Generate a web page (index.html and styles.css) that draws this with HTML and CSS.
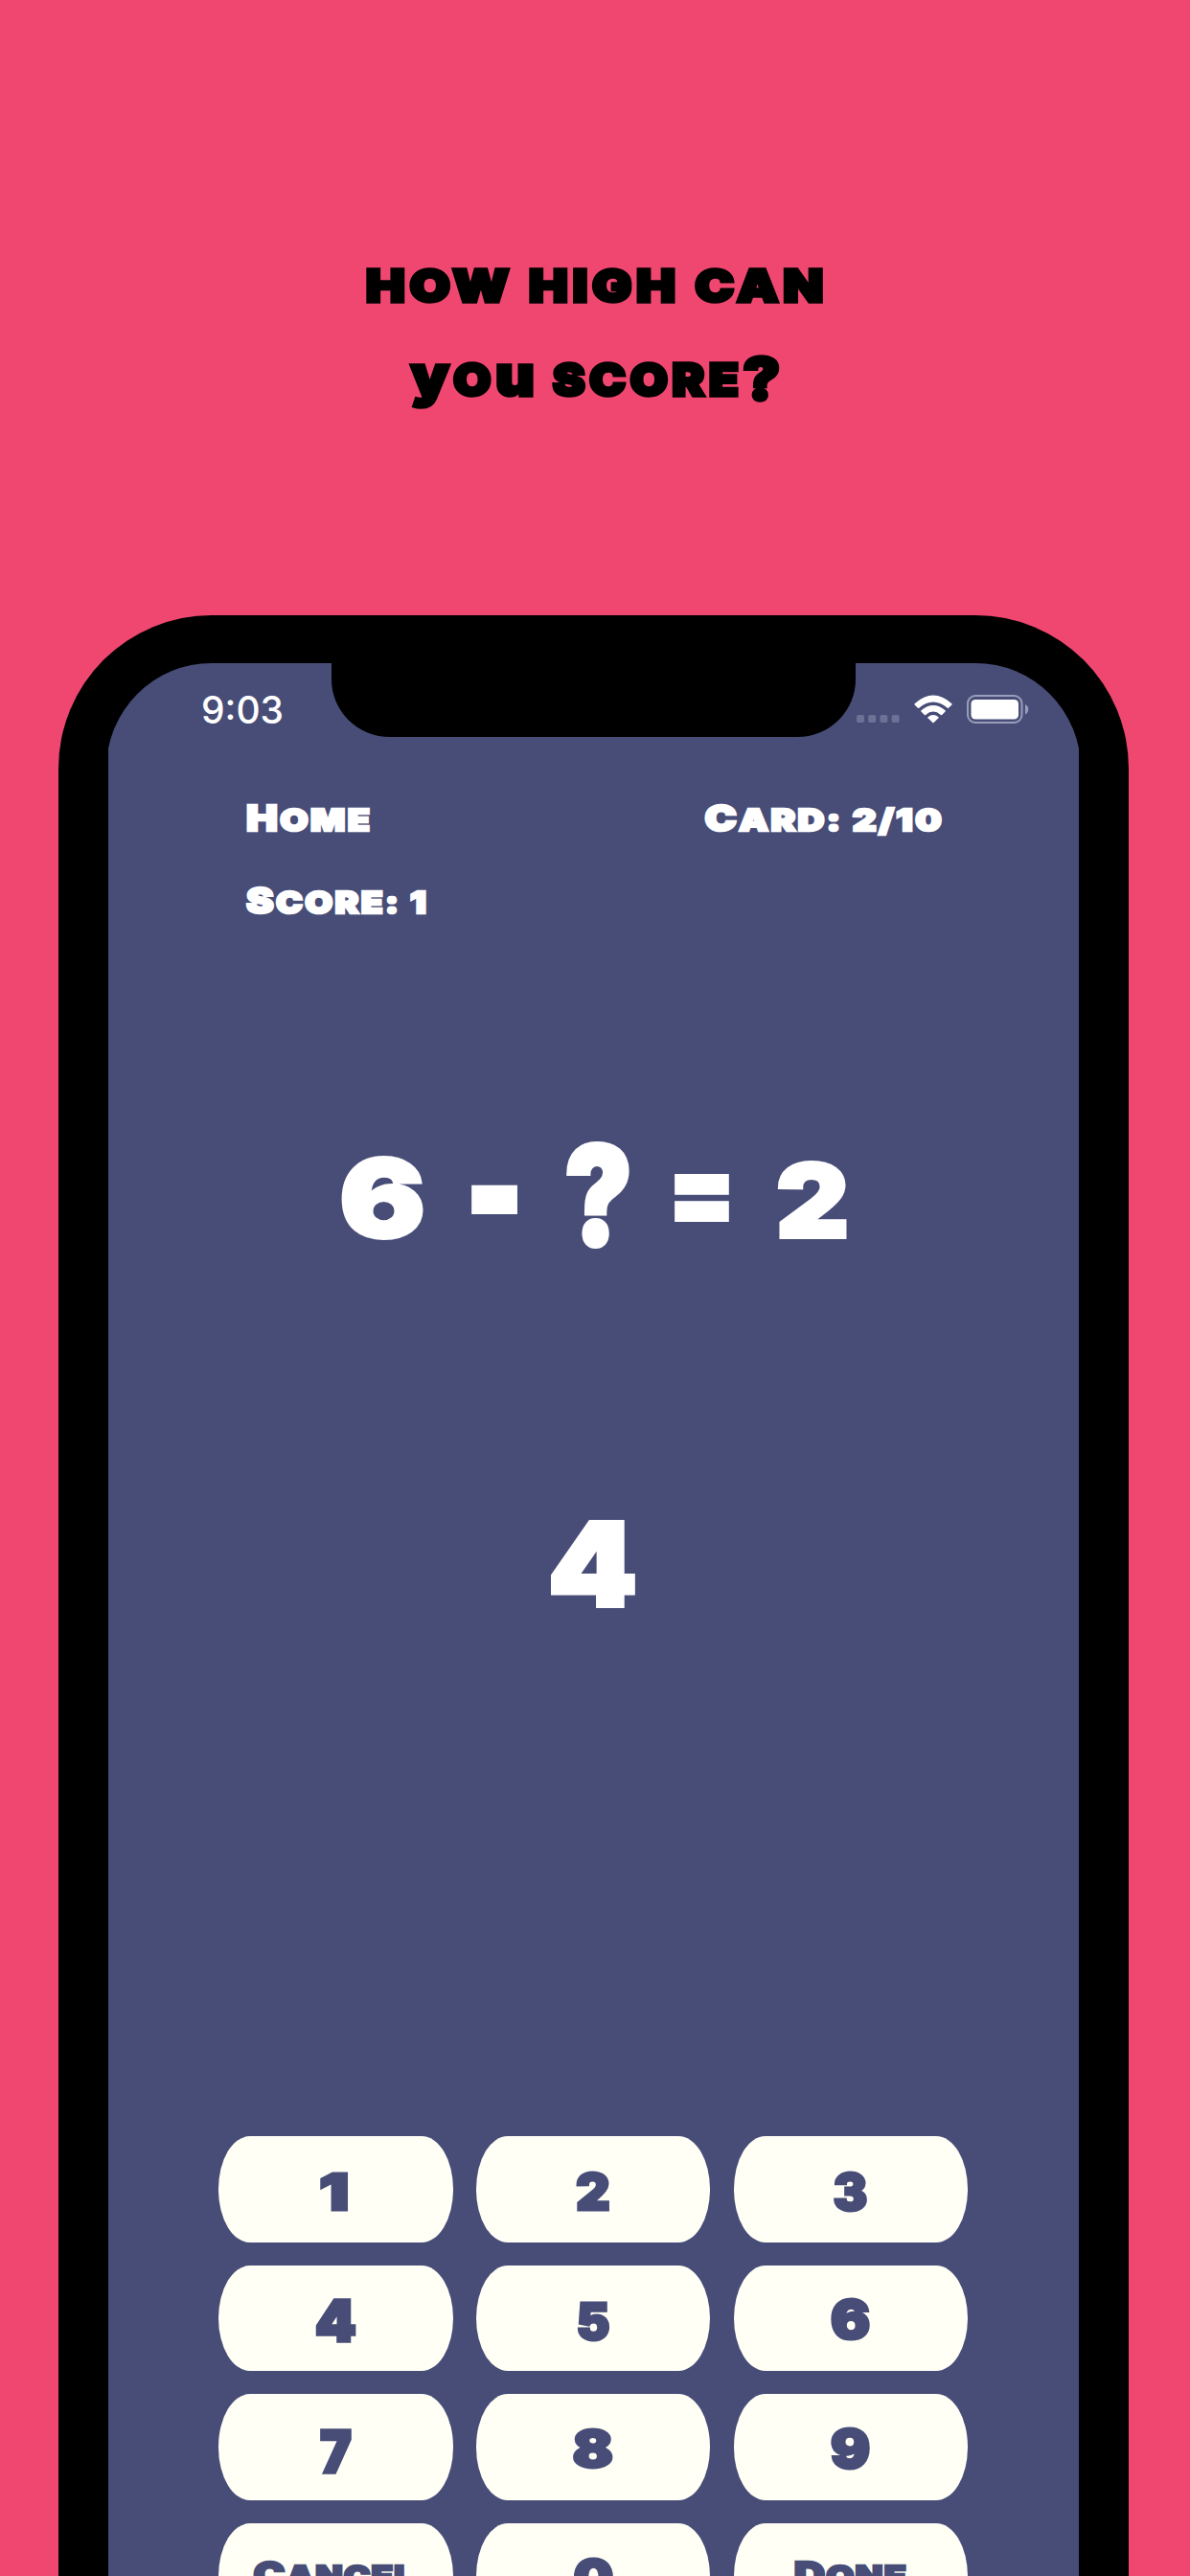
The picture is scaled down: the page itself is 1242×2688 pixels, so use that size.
FILE: index.html
```html
<!DOCTYPE html>
<html lang="en">
<head>
<meta charset="utf-8">
<title>Math Cards</title>
<link rel="stylesheet" href="styles.css">
</head>
<body>
<h1 class="headline">
  <span class="line line-1">how high can</span>
  <span class="line line-2"><span class="low">y</span>o<span class="low">u</span> score<span class="mark">?</span></span>
</h1>
<main class="phone">
  <div class="screen">
    <div class="status">
      <span class="time">9:03</span>
      <span class="notch"></span>
      <span class="indicators">
        <svg class="signal" viewBox="0 0 45 8" width="45" height="8"><rect width="8" height="8" rx="2"/><rect x="12.2" width="8" height="8" rx="2"/><rect x="24.4" width="8" height="8" rx="2"/><rect x="36.6" width="8" height="8" rx="2"/></svg>
        <svg class="wifi" viewBox="0 0 40 30" width="40" height="30"><path d="M0.6 9.2Q20-8.2 39.4 9.2Q39.9 9.8 39.4 10.4L36 13.8Q35.4 14.3 34.8 13.8Q20 1.2 5.200 13.800Q4.600 14.300 4 13.800L.6 10.400Q.1 9.800.6 9.200Z"/><path d="M7.400 16.300Q20 5.700 32.600 16.300Q33.100 16.900 32.600 17.500L29.100 21Q28.500 21.500 27.900 21Q20 14.200 12.100 21Q11.500 21.500 10.900 21L7.400 17.500Q6.900 16.900 7.400 16.300Z"/><path d="M14.500 23.200Q20 18.800 25.500 23.200Q26 23.700 25.500 24.300L20.600 29.100Q20 29.600 19.400 29.100L14.500 24.300Q14 23.700 14.500 23.200Z"/></svg>
        <svg class="battery" viewBox="0 0 65 30" width="65" height="30"><rect class="shell" x="1" y="1" width="56.500" height="28" rx="8"/><rect x="4.500" y="5" width="49.500" height="20.500" rx="4.500"/><path class="tip" d="M61 10Q64.300 11.500 64.300 15Q64.300 18.500 61 20.500Z"/></svg>
      </span>
    </div>
    <header class="info">
      <div class="label home">Home</div>
      <div class="label card">Card: 2/10</div>
      <div class="label score">Score: 1</div>
    </header>
    <div class="equation">
      <span class="eq six">6</span><span class="eq minus">-</span><span class="eq unknown">?</span><span class="eq equals">=</span><span class="eq two">2</span>
    </div>
    <div class="answer">4</div>
    <div class="keypad">
      <div class="key"><span class="k1">1</span></div><div class="key"><span class="k2">2</span></div><div class="key"><span class="k3">3</span></div>
      <div class="key"><span class="k4">4</span></div><div class="key"><span class="k5">5</span></div><div class="key"><span class="k6">6</span></div>
      <div class="key"><span class="k7">7</span></div><div class="key"><span class="k8">8</span></div><div class="key"><span class="k9">9</span></div>
      <div class="key word"><span class="cancel">Cancel</span></div><div class="key"><span class="k0">0</span></div><div class="key word"><span class="done">Done</span></div>
    </div>
  </div>
</main>
</body>
</html>
```
FILE: styles.css
```css
* { box-sizing: border-box; }
html, body { margin: 0; height: 2688px; overflow: hidden; }
body {
  background: #f04770;
  font-family: Inter, "Liberation Sans", sans-serif;
  font-weight: 900;
}
.headline {
  display: flex;
  flex-direction: column;
  align-items: center;
  margin: 0;
  height: 642px;
  padding-top: 249px;
  font-size: 47px;
  font-weight: 900;
  color: #000;
  -webkit-text-stroke: 3.500px #000;
}
.line {
  display: block;
  height: 98px;
  line-height: 98px;
  text-transform: uppercase;
  letter-spacing: 4px;
}
.line-1 { transform: translateX(2px) scaleX(1.165); }
.line-2 { transform: translateX(3px) scaleX(1.085); }
.line .low { font-size: 58px; line-height: 0; text-transform: none; }
.line .mark { font-size: 60px; line-height: 0; vertical-align: -4px; }

.phone {
  width: 1117px;
  height: 2046px;
  margin-left: 61px;
  padding: 50px 50px 0;
  background: #000;
  border-radius: 160px 160px 0 0;
}
.screen {
  height: 1996px;
  padding: 0 2px;
  overflow: hidden;
  clip-path: inset(0 2px);
  background: #474d77;
  border-radius: 110px 110px 0 0;
  color: #fff;
}
.status {
  display: grid;
  grid-template-columns: 233px 547.400px 1fr;
  grid-template-rows: 77px;
  height: 77px;
}
.time {
  padding-left: 97px;
  font-size: 39px;
  font-weight: 550;
  line-height: 97px;
}
.notch { background: #000; border-radius: 0 0 61px 61px / 0 0 60px 60px; }
.indicators { display: flex; align-items: flex-start; padding: 33px 0 0 1px; fill: #fff; }
.signal { margin-top: 21px; fill: #6c7196; }
.wifi { margin-left: 15px; }
.battery { margin-left: 15px; }
.shell { fill: none; stroke: #9a9dba; stroke-width: 2; }
.tip { fill: #9a9dba; }

.info {
  display: grid;
  grid-template-columns: 1fr auto;
  grid-template-rows: 86px 86px;
  height: 214px;
  padding: 44px 144px 0;
}
.label {
  font-size: 32px;
  line-height: 86px;
  text-transform: uppercase;
  letter-spacing: 2px;
  transform-origin: left center;
  -webkit-text-stroke: 2.500px #fff;
}
.label::first-letter { font-size: 37px; line-height: 0; }
.home { transform: scaleX(1.185); }
.score { transform: scaleX(1.165); }
.card { transform-origin: right center; transform: translateX(3px) scaleX(1.205); }

.equation {
  display: grid;
  grid-template-columns: 118px 112px 107px 111px 120px;
  margin: 192px 0 0 227px;
  height: 150px;
}
.eq {
  text-align: center;
  font-size: 112px;
  line-height: 150px;
  -webkit-text-stroke: 4px #fff;
}
.six { transform: translateX(0) scaleX(1.18); }
.minus { transform: translate(2px, -12px) scale(1.16, 1.55); -webkit-text-stroke-width: 3px; }
.unknown { font-size: 144px; transform: translate(1px, -3px) scaleX(.83); }
.equals { transform: translateY(-8px) scaleX(.9); }
.two { transform: translateY(2px) scale(1.05, .95); }

.answer {
  margin-top: 232px;
  height: 150px;
  text-align: center;
  font-size: 121px;
  line-height: 150px;
  transform: translateX(-1px) scaleX(1.1);
  -webkit-text-stroke: 4px #fff;
}
.keypad {
  display: grid;
  grid-template-columns: repeat(3, 244.500px);
  grid-auto-rows: 110.500px;
  gap: 24px 24.300px;
  margin: 522px 0 0 115px;
}
.key {
  display: flex;
  justify-content: center;
  align-items: center;
  background: #fffff5;
  border-radius: 33px / 55px;
  color: #474d77;
  font-size: 52px;
  line-height: 1;
  -webkit-text-stroke: 3px #474d77;
}
.k1 { transform: translate(-1px, 4px) scaleX(1.32); }
.k2 { transform: translateY(4px) scaleX(1.05); }
.k3 { transform: translateY(4px) scaleX(1.02); }
.k4 { transform: translateY(4px) scale(1.17, 1.13); }
.k5 { transform: translateY(4px); }
.k6 { transform: translateY(2px) scale(1.17, 1.05); }
.k7 { transform: translateY(6px) scale(1.05, 1.15); }
.k8 { transform: translateY(3px) scaleX(1.19); }
.k9 { transform: translateY(3px) scale(1.17, 1.05); }
.k0 { transform: translateY(3px) scaleX(1.13); }
.word { font-size: 31px; text-transform: uppercase; letter-spacing: 1px; -webkit-text-stroke-width: 2.500px; }
.word span { display: block; line-height: 40px; }
.word span::first-letter { font-size: 37px; line-height: 0; }
.cancel { transform: translate(-1px, 1px) scaleX(1.19); }
.done { transform: translate(0, 1px) scaleX(1.21); }
```
